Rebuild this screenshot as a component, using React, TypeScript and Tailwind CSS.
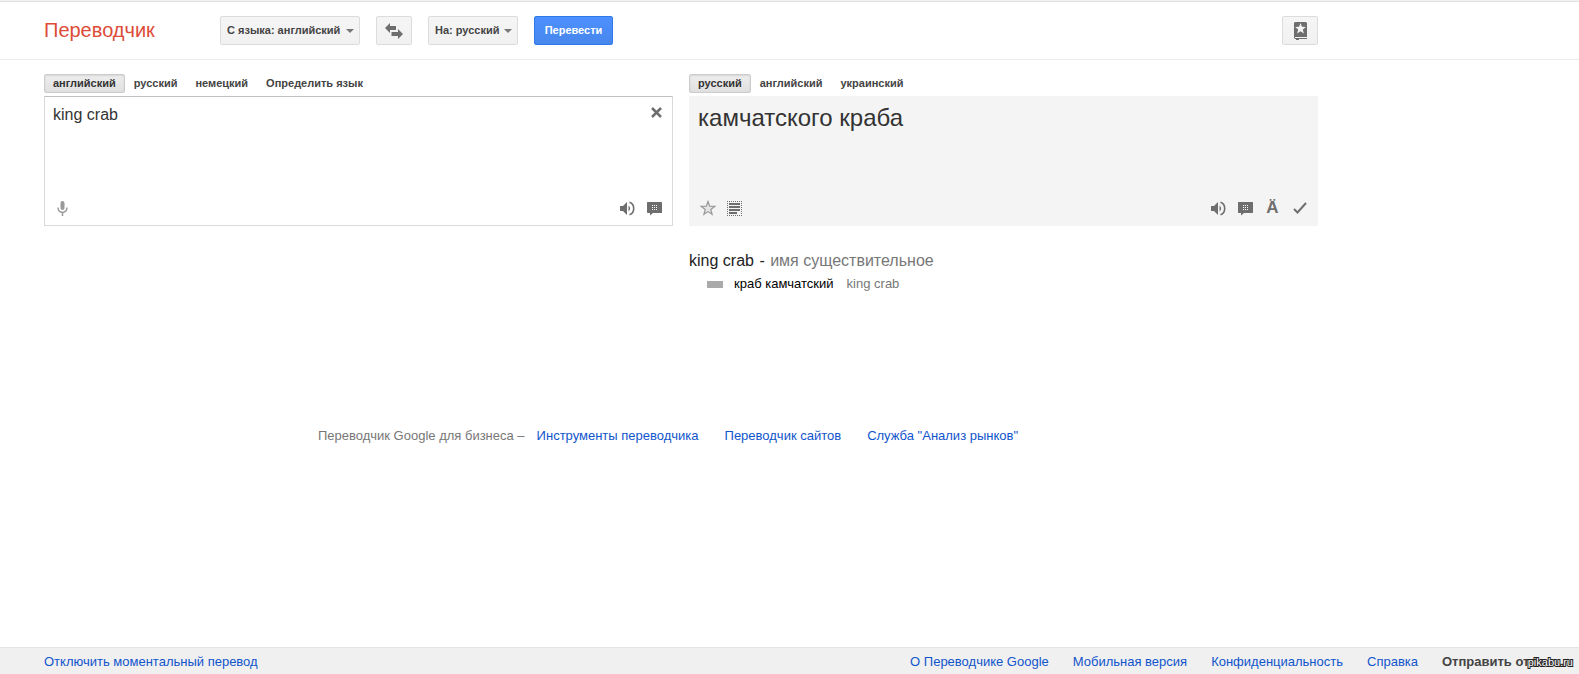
import { useState } from "react";
import type { ReactNode } from "react";

const sourceTabs = ["английский", "русский", "немецкий", "Определить язык"];
const targetTabs = ["русский", "английский", "украинский"];
const businessLinks = [
  "Инструменты переводчика",
  "Переводчик сайтов",
  'Служба "Анализ рынков"',
];
const footerLinks = [
  "О Переводчике Google",
  "Мобильная версия",
  "Конфиденциальность",
  "Справка",
];

function LanguageSelect({
  label,
  options,
  className,
}: {
  label: string;
  options: string[];
  className: string;
}) {
  return (
    <div className={`relative ${className}`}>
      <select
        aria-label={label}
        className="h-[29px] w-full appearance-none rounded-xs border border-[#dcdcdc] bg-linear-to-b from-[#f5f5f5] to-[#f1f1f1] pl-1.5 text-[11px] font-bold text-[#444]"
      >
        {options.map((o) => (
          <option key={o}>
            {label}: {o}
          </option>
        ))}
      </select>
      <svg
        className="pointer-events-none absolute top-[13px] right-1.5"
        width="8"
        height="4"
        viewBox="0 0 8 4"
      >
        <path d="M0 0h8L4 4z" fill="#777" />
      </svg>
    </div>
  );
}

function Tabs({ items }: { items: string[] }) {
  const [active, setActive] = useState(0);

  return (
    <div className="flex h-[19px]">
      {items.map((item, i) => (
        <button
          key={item}
          onClick={() => setActive(i)}
          className={`rounded-xs border px-2 text-[11px] leading-[17px] font-bold whitespace-nowrap ${
            i === active
              ? "border-[#ccc] bg-linear-to-b from-[#eee] to-[#e0e0e0] text-[#333] shadow-[inset_0_1px_2px_rgba(0,0,0,0.1)]"
              : "border-transparent text-[#444]"
          }`}
        >
          {item}
        </button>
      ))}
    </div>
  );
}

function IconButton({ label, children }: { label: string; children: ReactNode }) {
  return (
    <button
      aria-label={label}
      className="flex h-5 w-[27px] items-center justify-center text-[#6e6e6e]"
    >
      {children}
    </button>
  );
}

function SpeakerIcon() {
  return (
    <svg width="15" height="15" viewBox="0 0 15 15">
      <path d="M0 5h3l4-4v13l-4-4H0z" fill="currentColor" />
      <path d="M8.5 4.5c2.2 1.6 2.2 4.4 0 6z" fill="currentColor" />
      <path
        d="M9.5 1.2c5.6 2 5.6 10.6 0 12.6"
        fill="none"
        stroke="currentColor"
        strokeWidth="1.6"
      />
    </svg>
  );
}

function KeyboardIcon() {
  return (
    <svg width="15" height="15" viewBox="0 0 15 15">
      <path d="M.5 1h14l.5.5v10l-.5.5H6l-3 2.500V12H.5l-.5-.5v-10z" fill="currentColor" />
      <path
        d="M5 4h1v1H5zM7 4h1v1H7zM9 4h1v1H9zM5 6h1v1H5zM7 6h1v1H7zM9 6h1v1H9zM5 8h1v1H5zM7 8h1v1H7zM9 8h1v1H9z"
        fill="#fff"
      />
    </svg>
  );
}

export default function App() {
  const [text, setText] = useState("king crab");

  return (
    <div className="flex min-h-screen flex-col overflow-hidden bg-white font-['Liberation_Sans',Arial,sans-serif] text-[13px] text-[#222]">
      <header className="h-[60px] border-b border-[#ebebeb]">
        <div className="h-0.5 border-b border-[#e2e2e2] bg-[#f1f1f1]" />
        <div className="flex max-w-[1318px] items-center pt-3.5 pl-11">
          <h1 className="w-44 text-xl leading-[29px] text-[#dd4b39]">Переводчик</h1>
          <LanguageSelect
            label="С языка"
            options={["английский", "русский", "немецкий"]}
            className="w-[140px]"
          />
          <button
            aria-label="Поменять языки местами"
            className="ml-4 flex h-[29px] w-9 items-center justify-center rounded-xs border border-[#dcdcdc] bg-linear-to-b from-[#f5f5f5] to-[#f1f1f1]"
          >
            <svg width="18" height="16" viewBox="0 0 18 16">
              <path
                d="M0 5l5-5v3h6v4H5v3zM18 11l-5 5v-3H6.5V9H13V6z"
                fill="#6e6e6e"
              />
            </svg>
          </button>
          <LanguageSelect
            label="На"
            options={["русский", "английский", "украинский"]}
            className="ml-4 w-[90px]"
          />
          <button className="ml-4 h-[29px] w-[79px] rounded-xs border border-[#3079ed] bg-linear-to-b from-[#4d90fe] to-[#4787ed] text-[11px] font-bold text-white">
            Перевести
          </button>
          <button
            aria-label="Разговорник"
            className="ml-auto flex h-[29px] w-9 items-center justify-center rounded-xs border border-[#dcdcdc] bg-linear-to-b from-[#f5f5f5] to-[#f1f1f1]"
          >
            <svg width="13" height="18" viewBox="0 0 13 18">
              <path
                d="M1 0h11l1 1v14H1v1h12v1H5v1H2v-1H1l-1-1V1z"
                fill="#6e6e6e"
              />
              <path
                d="M6.5 1l1.4 3.800 4 .2-3.100 2.500 1.100 4-3.400-2.300-3.400 2.300 1.100-4L1.100 5l4-.2z"
                fill="#f5f5f5"
              />
            </svg>
          </button>
        </div>
      </header>

      <main className="max-w-[1318px] grow pt-3.5 pl-11">
        <div className="grid grid-cols-2 gap-x-4">
          <section>
            <Tabs items={sourceTabs} />
            <div className="mt-[3px] flex h-[130px] flex-col border border-[#d9d9d9] border-t-[#c0c0c0]">
              <div className="flex grow items-start">
                <textarea
                  aria-label="Исходный текст"
                  value={text}
                  onChange={(e) => setText(e.target.value)}
                  className="h-full grow resize-none px-2 pt-2 text-base leading-5 text-[#333] outline-none"
                />
                <button
                  aria-label="Очистить"
                  onClick={() => setText("")}
                  className="mt-2.5 mr-2.5"
                >
                  <svg width="11" height="11" viewBox="0 0 11 11">
                    <path
                      d="M1 1l9 9M10 1l-9 9"
                      stroke="#6e6e6e"
                      strokeWidth="2.5"
                    />
                  </svg>
                </button>
              </div>
              <div className="flex px-1 pb-[7px]">
                <button
                  aria-label="Голосовой ввод"
                  className="mr-auto flex h-5 w-[27px] items-center justify-center text-[#999]"
                >
                  <svg width="11" height="15" viewBox="0 0 11 15">
                    <rect x="3.5" width="4" height="9" rx="2" fill="currentColor" />
                    <path
                      d="M1 6.5C1 13 10 13 10 6.500M5.500 11.500V15"
                      fill="none"
                      stroke="currentColor"
                      strokeWidth="1.5"
                    />
                  </svg>
                </button>
                <IconButton label="Прослушать">
                  <SpeakerIcon />
                </IconButton>
                <IconButton label="Экранная клавиатура">
                  <KeyboardIcon />
                </IconButton>
              </div>
            </div>
          </section>

          <section>
            <Tabs items={targetTabs} />
            <div className="mt-[3px] flex h-[130px] flex-col bg-[#f4f4f4]">
              <p className="grow px-[9px] pt-1.5 text-2xl text-[#333]">
                камчатского краба
              </p>
              <div className="flex px-[5px] pb-2">
                <IconButton label="Добавить в разговорник">
                  <svg width="16" height="16" viewBox="0 0 16 16">
                    <path
                      d="M8 1.5l1.7 4.700 5 .2-3.900 3.100 1.300 4.800L8 11.600l-4.100 2.700 1.300-4.800-3.900-3.100 5-.2z"
                      fill="#e4e4e4"
                      stroke="#999"
                      strokeWidth="1.2"
                    />
                  </svg>
                </IconButton>
                <IconButton label="Выделить текст">
                  <svg width="15" height="15" viewBox="0 0 15 15">
                    <path
                      d="M0 .5h15M0 14.5h15M.5 0v15M14.5 0v15"
                      stroke="currentColor"
                      strokeDasharray="1 1"
                    />
                    <path
                      d="M2 2h11v2H2zM2 5h11v2H2zM2 8h11v2H2zM2 11h8v2H2z"
                      fill="currentColor"
                    />
                  </svg>
                </IconButton>
                <div className="grow" />
                <IconButton label="Прослушать перевод">
                  <SpeakerIcon />
                </IconButton>
                <IconButton label="Экранная клавиатура перевода">
                  <KeyboardIcon />
                </IconButton>
                <IconButton label="Транслитерация">
                  <span className="text-[17px] leading-5 font-bold">Ä</span>
                </IconButton>
                <IconButton label="Оценить перевод">
                  <svg width="14" height="12" viewBox="0 0 14 12">
                    <path
                      d="M1 7l3.5 3.500L13 1"
                      fill="none"
                      stroke="currentColor"
                      strokeWidth="2"
                    />
                  </svg>
                </IconButton>
              </div>
            </div>

            <div className="pt-[25px]">
              <h2 className="text-base leading-5">
                king crab <span className="mx-px">-</span>{" "}
                <span className="text-[#777]">имя существительное</span>
              </h2>
              <div className="mt-1 flex items-center pl-[18px] leading-[18px]">
                <div className="h-[7px] w-4 bg-[#aaa]" />
                <span className="ml-[11px] text-black">краб камчатский</span>
                <span className="ml-[13px] text-[#777]">king crab</span>
              </div>
            </div>
          </section>
        </div>

        <nav className="mt-[133px] flex justify-center leading-5">
          <span className="mr-3 text-[#777]">Переводчик Google для бизнеса –</span>
          {businessLinks.map((link) => (
            <a key={link} href="#" className="mr-[26px] text-[#15c]">
              {link}
            </a>
          ))}
        </nav>
      </main>

      <footer className="relative flex h-[27px] justify-between border-t border-[#e4e4e4] bg-[#f0f0f0] pl-11 leading-[28px] whitespace-nowrap">
        <a href="#" className="text-[#15c]">
          Отключить моментальный перевод
        </a>
        <div className="flex gap-6 pr-6">
          {footerLinks.map((link) => (
            <a key={link} href="#" className="text-[#15c]">
              {link}
            </a>
          ))}
          <a href="#" className="font-bold text-[#444]">
            Отправить отзыв
          </a>
        </div>
        <span className="absolute right-1.5 bottom-0.5 text-[11px] leading-5 text-white [paint-order:stroke] [-webkit-text-stroke:2px_#222]">
          pikabu.ru
        </span>
      </footer>
    </div>
  );
}
